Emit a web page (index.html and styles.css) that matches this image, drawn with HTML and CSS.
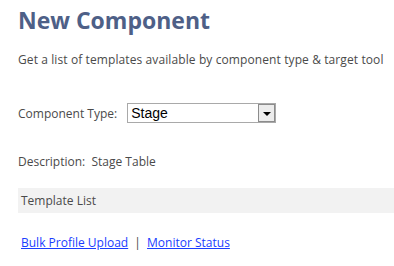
FILE: index.html
```html
<!DOCTYPE html>
<html lang="en">
<head>
  <meta charset="UTF-8">
  <title>New Component</title>
  <link rel="stylesheet" href="styles.css">
</head>
<body>
  <div class="page">
    <h1>New Component</h1>
    <p class="intro">Get a list of templates available by component type &amp; target tool</p>

    <div class="field">
      <label for="componentType">Component Type:</label>
      <div class="select-wrap">
        <select id="componentType">
          <option>Stage</option>
          <option>Dimension</option>
          <option>Fact</option>
        </select>
        <span class="select-arrow"></span>
      </div>
    </div>

    <p class="description">Description:&nbsp; Stage Table</p>

    <div class="section-head">Template List</div>

    <p class="links">
      <a href="#">Bulk Profile Upload</a>
      <span class="sep">|</span>
      <a href="#">Monitor Status</a>
    </p>
  </div>
</body>
</html>
```

FILE: styles.css
```css
body { margin: 0; font-family: "Open Sans", "Noto Sans", sans-serif; font-size: 12px; color: #4a4a4a; background: #fff; }
.page { padding: 4px 0 0 18px; }
h1 { margin: 0; font-size: 23px; font-weight: bold; color: #4e6087; line-height: 32px; }
.intro { margin: 15px 0 0; line-height: 18px; letter-spacing: 0.1px; }
.field { display: flex; align-items: center; margin-top: 34px; }
.field label { margin-right: 10px; }
.select-wrap { position: relative; width: 149px; height: 20px; }
.select-wrap select { appearance: none; -webkit-appearance: none; width: 100%; height: 100%; margin: 0; padding: 0 0 0 3px; border: 1px solid #a9a9a9; border-radius: 0; background: #fff; font-family: "Liberation Sans", Arial, sans-serif; font-size: 14px; color: #000; outline: none; }
.select-arrow { position: absolute; top: 1px; right: 1px; width: 15px; height: 16px; border: 1px solid #8c8c8c; background: #ececec; }
.select-arrow::after { content: ""; position: absolute; left: 4px; top: 7px; border-left: 4px solid transparent; border-right: 4px solid transparent; border-top: 4px solid #000; }
.description { margin: 30px 0 0; line-height: 18px; }
.section-head { margin-top: 17px; height: 25px; line-height: 25px; padding-left: 3px; background: #f2f2f2; }
.links { margin: 21px 0 0; padding-left: 3px; line-height: 18px; }
.links a { color: #1a3dff; text-decoration: underline; }
.links .sep { margin: 0 3px; }
```
